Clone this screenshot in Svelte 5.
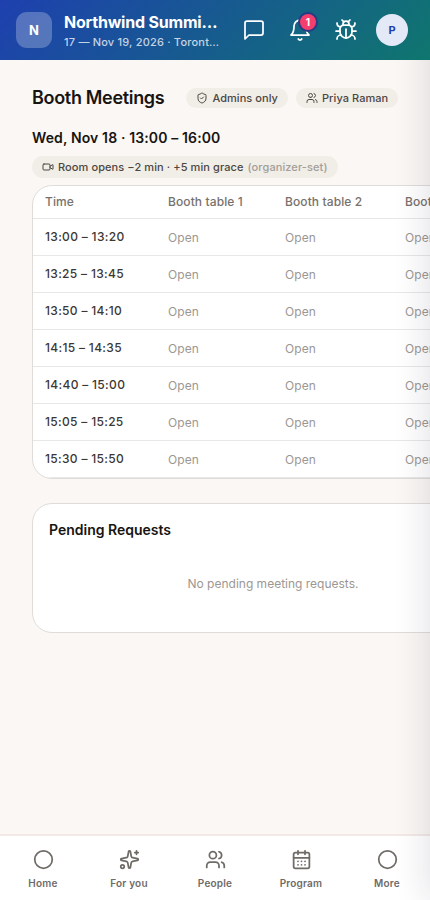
<script>
    const tables = ['Booth table 1', 'Booth table 2', 'Booth table 3'];

    const slots = [
        '13:00 – 13:20',
        '13:25 – 13:45',
        '13:50 – 14:10',
        '14:15 – 14:35',
        '14:40 – 15:00',
        '15:05 – 15:25',
        '15:30 – 15:50'
    ];

    const navItems = [
        { label: 'Home', icon: 'circle' },
        { label: 'For you', icon: 'sparkles' },
        { label: 'People', icon: 'users' },
        { label: 'Program', icon: 'calendar' },
        { label: 'More', icon: 'circle' }
    ];

    const icons = {
        message: ['M21 15a2 2 0 0 1-2 2H7l-4 4V5a2 2 0 0 1 2-2h14a2 2 0 0 1 2 2z'],
        bell: [
            'M10.3 21a1.94 1.94 0 0 0 3.4 0',
            'M6 8a6 6 0 0 1 12 0c0 7 3 9 3 9H3s3-2 3-9'
        ],
        bug: [
            'M12 20v-9',
            'M14 7a4 4 0 0 1 4 4v3a6 6 0 0 1-12 0v-3a4 4 0 0 1 4-4z',
            'M14.12 3.88 16 2',
            'M21 21a4 4 0 0 0-3.81-4',
            'M21 5a4 4 0 0 1-3.55 3.97',
            'M22 13h-4',
            'M3 21a4 4 0 0 1 3.81-4',
            'M3 5a4 4 0 0 0 3.55 3.97',
            'M6 13H2',
            'm8 2 1.88 1.88',
            'M9 7.13V6a3 3 0 1 1 6 0v1.13'
        ],
        shield: [
            'M20 13c0 5-3.5 7.5-7.66 8.95a1 1 0 0 1-.67-.01C7.5 20.5 4 18 4 13V6a1 1 0 0 1 1-1c2 0 4.5-1.2 6.24-2.72a1.17 1.17 0 0 1 1.52 0C14.51 3.81 17 5 19 5a1 1 0 0 1 1 1z',
            'm9 12 2 2 4-4'
        ],
        users: [
            'M16 21v-2a4 4 0 0 0-4-4H6a4 4 0 0 0-4 4v2',
            'M9 11a4 4 0 1 0 0-8 4 4 0 0 0 0 8z',
            'M22 21v-2a4 4 0 0 0-3-3.87',
            'M16 3.13a4 4 0 0 1 0 7.75'
        ],
        video: [
            'm16 13 5.22 3.48a.5.5 0 0 0 .78-.42V7.87a.5.5 0 0 0-.75-.43L16 10.5',
            'M4 6h10a2 2 0 0 1 2 2v8a2 2 0 0 1-2 2H4a2 2 0 0 1-2-2V8a2 2 0 0 1 2-2z'
        ],
        circle: ['M12 2a10 10 0 1 0 0 20 10 10 0 0 0 0-20z'],
        sparkles: [
            'M11.02 2.81a1 1 0 0 1 1.96 0l1.05 5.56a2 2 0 0 0 1.6 1.6l5.56 1.05a1 1 0 0 1 0 1.96l-5.56 1.05a2 2 0 0 0-1.6 1.6l-1.05 5.56a1 1 0 0 1-1.96 0l-1.05-5.56a2 2 0 0 0-1.6-1.6l-5.56-1.05a1 1 0 0 1 0-1.96l5.56-1.05a2 2 0 0 0 1.6-1.6z',
            'M20 2v4',
            'M22 4h-4',
            'M4 18a2 2 0 1 0 0 4 2 2 0 0 0 0-4z'
        ],
        calendar: [
            'M8 2v4',
            'M16 2v4',
            'M5 4h14a2 2 0 0 1 2 2v14a2 2 0 0 1-2 2H5a2 2 0 0 1-2-2V6a2 2 0 0 1 2-2z',
            'M3 10h18',
            'M8 14h.01',
            'M12 14h.01',
            'M16 14h.01',
            'M8 18h.01',
            'M12 18h.01',
            'M16 18h.01'
        ]
    };
</script>

{#snippet icon(name, size, stroke = 2)}
    <svg width={size} height={size} viewBox="0 0 24 24" fill="none" stroke="currentColor" stroke-width={stroke} stroke-linecap="round" stroke-linejoin="round" aria-hidden="true">
        {#each icons[name] as d}
            <path {d} />
        {/each}
    </svg>
{/snippet}

<div class="app">
    <header class="topbar">
        <div class="logo">N</div>
        <div class="event">
            <div class="event-name">Northwind Summit 2026</div>
            <div class="event-meta">17 — Nov 19, 2026 · Toronto, Canada</div>
        </div>
        <div class="actions">
            <button aria-label="Messages">{@render icon('message', 24, 1.75)}</button>
            <button aria-label="Notifications">
                {@render icon('bell', 24, 1.75)}
                <span class="badge">1</span>
            </button>
            <button aria-label="Report a bug">{@render icon('bug', 24, 1.75)}</button>
            <div class="avatar">P</div>
        </div>
    </header>

    <main>
        <div class="title-row">
            <h1>Booth Meetings</h1>
            <span class="chip admins">{@render icon('shield', 12)}Admins only</span>
            <span class="chip">{@render icon('users', 12)}Priya Raman</span>
        </div>

        <h2>Wed, Nov 18 · 13:00 – 16:00</h2>
        <span class="chip room">
            {@render icon('video', 12)}
            <span>Room opens −2 min · +5 min grace</span>
            <span class="muted">(organizer-set)</span>
        </span>

        <div class="card schedule">
            <table>
                <thead>
                    <tr>
                        <th class="time">Time</th>
                        {#each tables as table}
                            <th>{table}</th>
                        {/each}
                    </tr>
                </thead>
                <tbody>
                    {#each slots as slot}
                        <tr>
                            <td class="time">{slot}</td>
                            {#each tables as table (table)}
                                <td class="open"><span>Open</span></td>
                            {/each}
                        </tr>
                    {/each}
                </tbody>
            </table>
        </div>

        <section class="card pending">
            <h3>Pending Requests</h3>
            <p>No pending meeting requests.</p>
        </section>
    </main>

    <nav>
        {#each navItems as item}
            <div class="nav-item">
                {@render icon(item.icon, 21)}
                <span>{item.label}</span>
            </div>
        {/each}
    </nav>

    <aside class="drawer"></aside>
</div>

<style>
    :global(body) { margin: 0; overflow: hidden; }

    .app {
        position: relative;
        display: flex;
        flex-direction: column;
        width: 100%;
        height: 100vh;
        overflow: hidden;
        background: #fbf7f4;
        color: #171412;
        font-family: Inter, "Liberation Sans", sans-serif;
    }

    svg { display: block; flex-shrink: 0; }

    .topbar {
        position: relative;
        z-index: 3;
        display: flex;
        align-items: center;
        box-sizing: border-box;
        height: 60px;
        padding: 0 22px 0 16px;
        flex-shrink: 0;
        color: #fff;
        background: linear-gradient(135deg, #1e40af 0%, #0f766e 100%);
    }

    .logo {
        display: grid;
        place-items: center;
        width: 36px;
        height: 36px;
        flex-shrink: 0;
        border-radius: 11px;
        background: rgba(255, 255, 255, 0.25);
        font-size: 13px;
        font-weight: 700;
    }

    .event { width: 155px; margin-left: 12px; padding-top: 2px; flex-shrink: 0; }
    .event-name, .event-meta { overflow: hidden; white-space: nowrap; text-overflow: ellipsis; }
    .event-name { font-size: 16px; line-height: 22px; font-weight: 700; letter-spacing: -0.2px; }
    .event-meta { font-size: 11px; line-height: 18px; font-weight: 500; letter-spacing: 0.2px; color: rgba(255, 255, 255, 0.75); }

    .actions { display: flex; align-items: center; gap: 22px; margin-left: auto; }
    .actions button { position: relative; padding: 0; border: 0; background: none; color: #fff; }

    .badge {
        position: absolute;
        top: -6px;
        right: -6px;
        display: grid;
        place-items: center;
        width: 16px;
        height: 16px;
        border: 2px solid #253b83;
        border-radius: 50%;
        background: #f43f6e;
        font: 700 10px Inter, sans-serif;
    }

    .avatar {
        display: grid;
        place-items: center;
        width: 32px;
        height: 32px;
        margin-left: -4px;
        border-radius: 50%;
        background: #e4e9f7;
        color: #1e40af;
        font-size: 11px;
        font-weight: 700;
    }

    main { flex: 1; padding: 27px 32px 0; overflow: hidden; }

    .title-row { display: flex; align-items: center; gap: 8px; height: 22px; }
    .admins { margin-left: 14px; }

    h1, h2, h3, p { margin: 0; }
    h1 { font-size: 18px; line-height: 22px; font-weight: 600; letter-spacing: -0.32px; white-space: nowrap; }
    h2 { margin: 19px 0 8px; font-size: 14px; line-height: 20px; font-weight: 600; letter-spacing: 0.13px; }

    .chip {
        display: inline-flex;
        align-items: center;
        gap: 4px;
        box-sizing: border-box;
        height: 20px;
        padding: 0 10px;
        border-radius: 10px;
        background: #f1ede7;
        color: #4b4742;
        font-size: 11px;
        font-weight: 500;
        letter-spacing: 0.06px;
        white-space: nowrap;
    }
    .room { display: flex; width: max-content; height: 22px; border-radius: 11px; letter-spacing: 0.09px; }
    .muted { color: #a39e98; }

    .card {
        box-sizing: border-box;
        width: 482px;
        border: 1px solid #dfdcda;
        border-radius: 20px;
        background: #fff;
    }

    .schedule { margin-top: 7px; overflow: hidden; }

    table { width: 480px; table-layout: fixed; border-collapse: separate; border-spacing: 0; }
    th, td {
        box-sizing: border-box;
        padding: 0 0 2px 12px;
        border-bottom: 1px solid #e9e7e5;
        text-align: left;
        font-size: 12px;
        letter-spacing: 0.1px;
        white-space: nowrap;
    }
    th { height: 33px; font-weight: 500; color: #77716c; }
    th:nth-child(2) { width: 117px; }
    th:nth-child(3) { width: 120px; }
    th.time { width: 123px; }
    td { height: 37px; }
    td.time { font-weight: 500; color: #3b3735; letter-spacing: 0.32px; }
    .open { font-weight: 400; color: #9c9792; }
    .open span { display: block; padding-top: 2px; }

    .pending { height: 130px; margin-top: 24px; padding: 16px; }
    h3 { font-size: 14px; line-height: 20px; font-weight: 600; }
    .pending p { margin-top: 35px; font-size: 12px; line-height: 18px; color: #9c9792; text-align: center; }

    nav {
        display: flex;
        box-sizing: border-box;
        height: 66px;
        flex-shrink: 0;
        border-top: 2px solid #f2e9e6;
        background: #fff;
    }
    .nav-item {
        display: flex;
        flex: 1;
        flex-direction: column;
        align-items: center;
        gap: 6px;
        padding-top: 13px;
        color: #6f6b67;
        font-size: 10px;
        line-height: 14px;
        font-weight: 600;
        letter-spacing: 0.2px;
    }

    /* closed side panel, only its shadow reaches the screen */
    .drawer {
        position: absolute;
        top: 0;
        bottom: 0;
        left: 100%;
        z-index: 2;
        width: 300px;
        box-shadow: -4px 0 32px rgba(23, 23, 60, 0.12);
    }
</style>
